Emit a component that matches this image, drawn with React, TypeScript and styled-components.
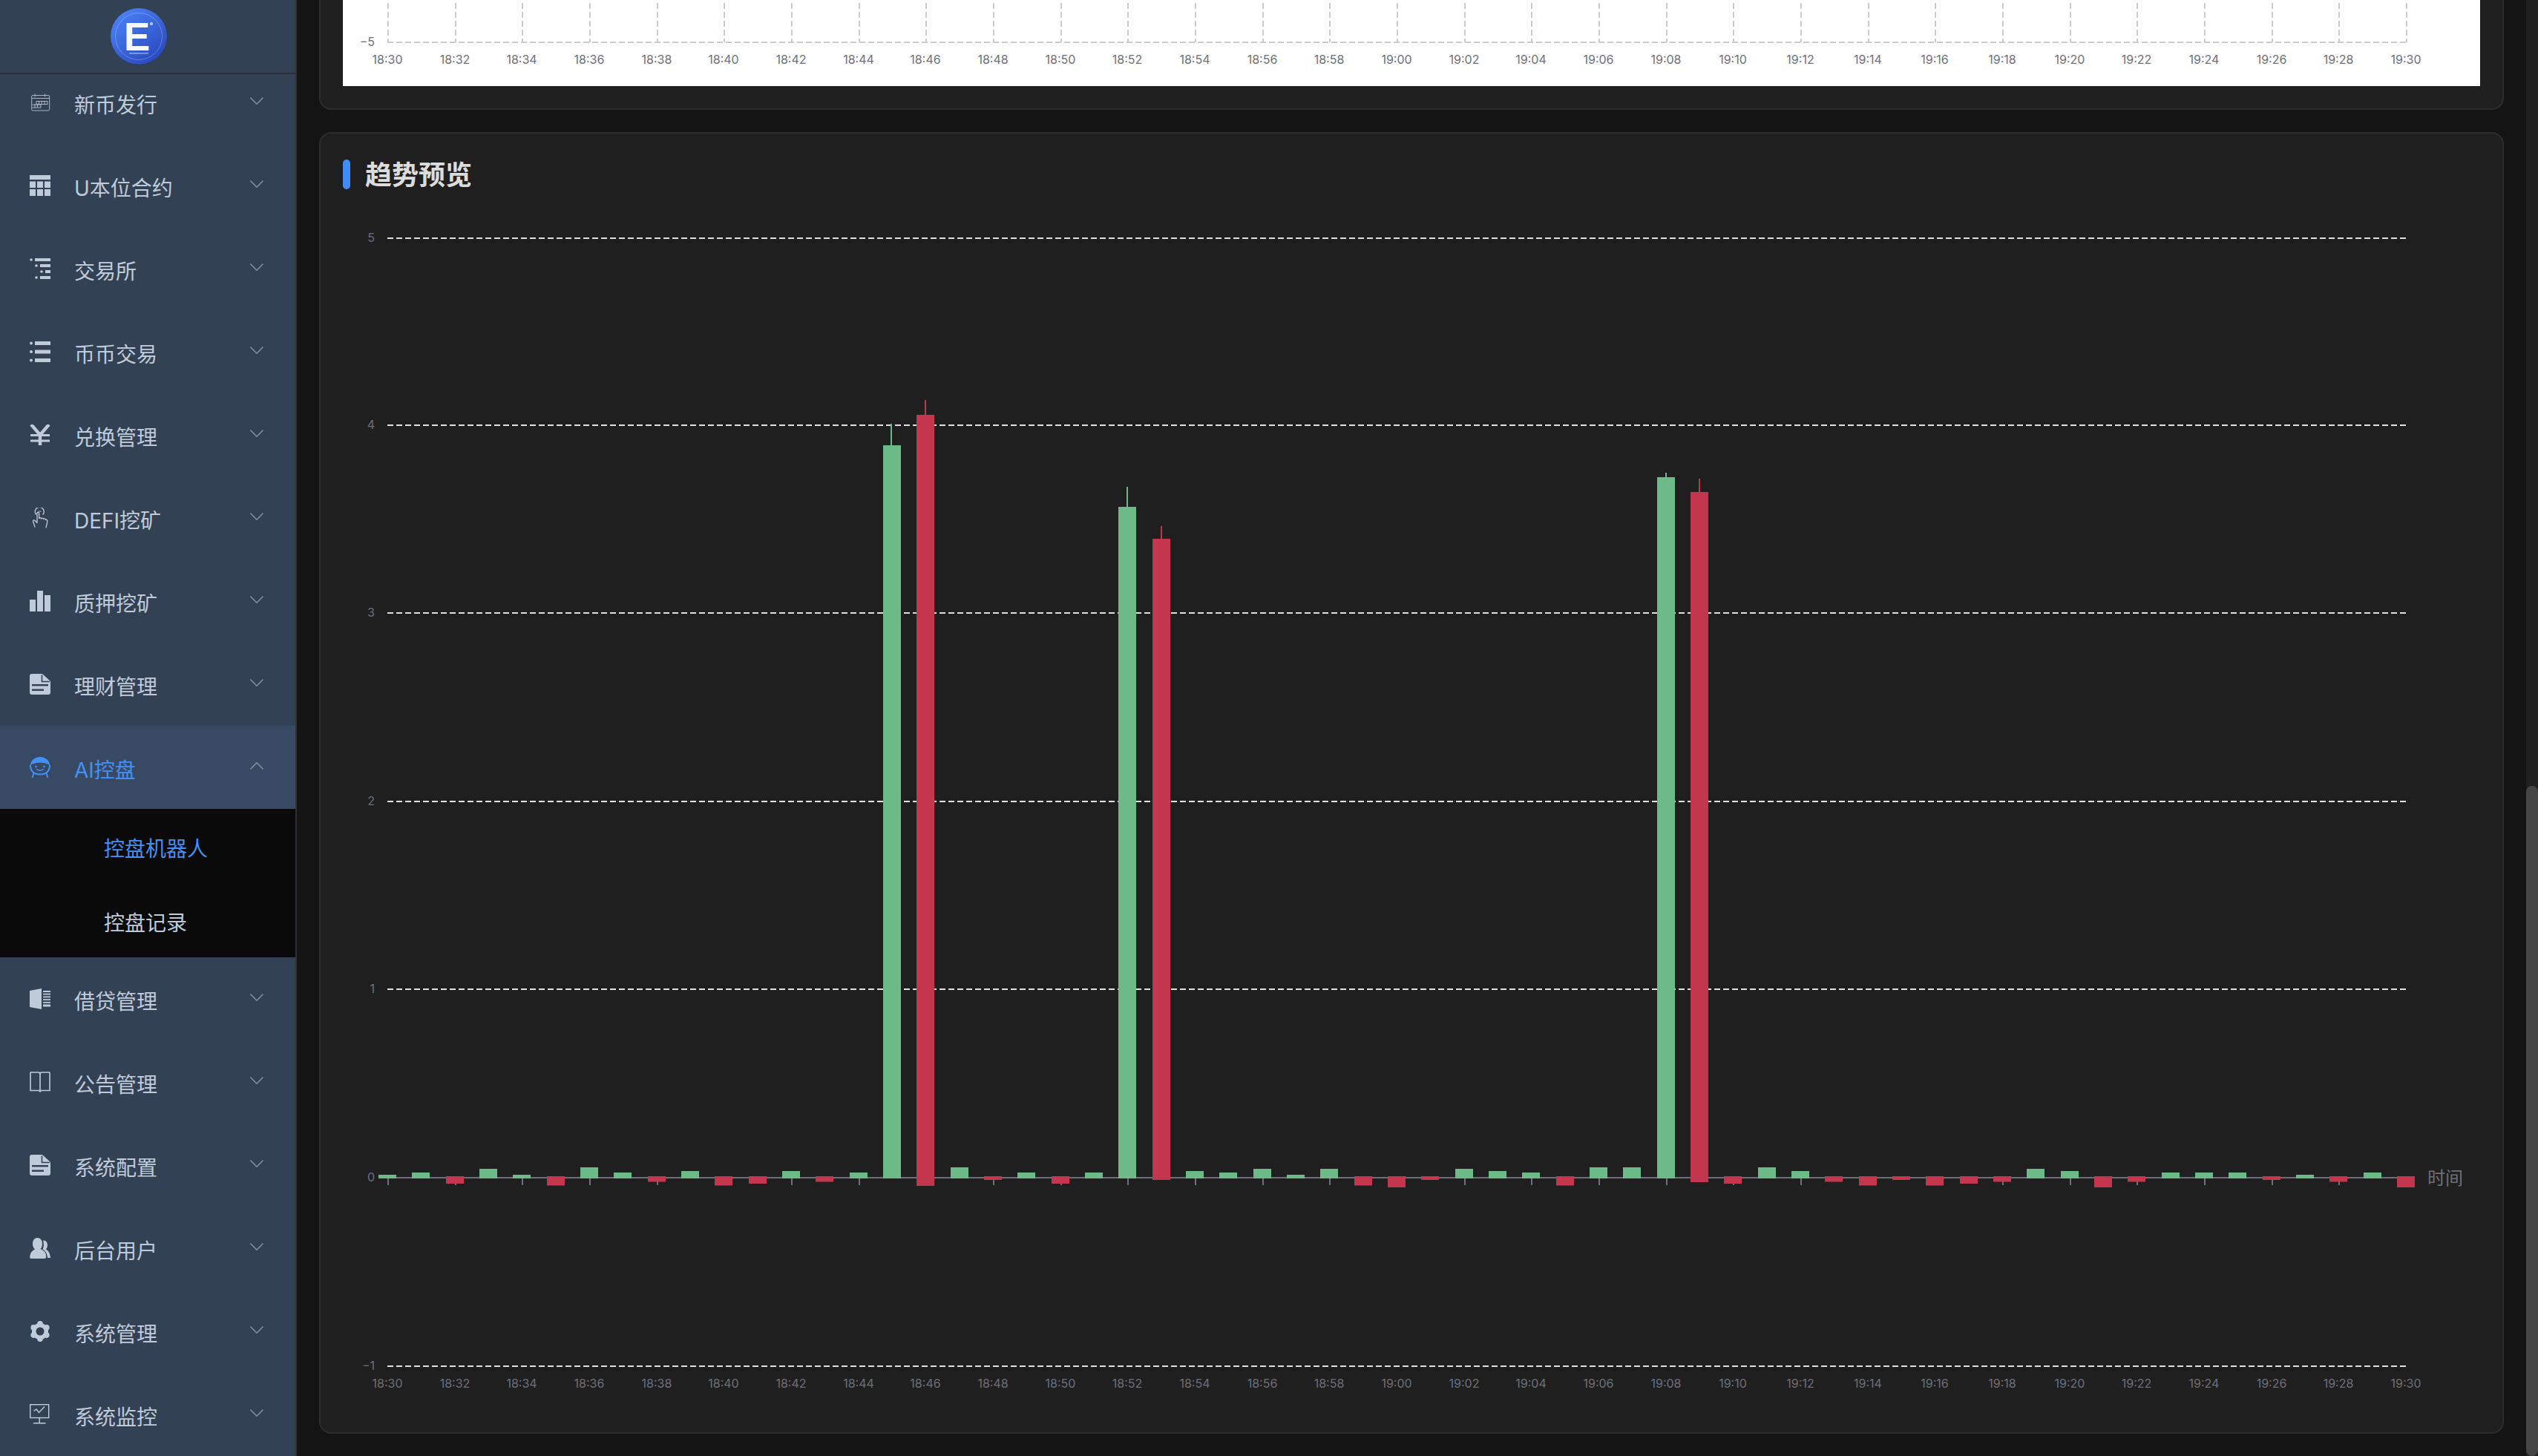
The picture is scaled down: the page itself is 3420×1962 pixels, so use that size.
import React from "react";
import styled, { createGlobalStyle } from "styled-components";

const SIDE_BG = "#334155";
const TEXT = "#bfcbd9";
const BLUE = "#4390f7";

const Global = createGlobalStyle`
  html, body { margin: 0; padding: 0; background: #141414; overflow: hidden; }
  body { font-family: Inter, "Noto Sans CJK SC", sans-serif; }
  * { box-sizing: border-box; }
`;

const Page = styled.div`
  display: flex;
  width: 3420px;
  height: 1962px;
  overflow: hidden;
  background: #141414;
`;

const Sidebar = styled.aside`
  display: flex;
  flex-direction: column;
  flex: none;
  width: 400px;
  height: 100%;
  background: ${SIDE_BG};
  border-right: 2px solid #2e3237;
`;

const LogoBar = styled.header`
  display: flex;
  flex: none;
  align-items: center;
  justify-content: center;
  height: 100px;
  padding-right: 24px;
  border-bottom: 2px solid #2b2e33;
`;

const MenuViewport = styled.nav`
  flex: 1;
  min-height: 0;
  overflow: hidden;
`;

const MenuList = styled.div`
  margin-top: -18px;
`;

const MenuRow = styled.div<{ $open?: boolean }>`
  display: flex;
  align-items: center;
  height: 112px;
  padding: 0 43px 0 40px;
  color: ${(p) => (p.$open ? BLUE : TEXT)};
  background: ${(p) => (p.$open ? "#384a63" : "transparent")};
`;

const IconSvg = styled.svg`
  flex: none;
  width: 28px;
  height: 28px;
  margin-right: 32px;
  fill: currentColor;
  stroke: none;
`;

const MenuLabel = styled.span`
  flex: 1;
  padding-top: 8px;
  font-size: 28px;
  line-height: 40px;
  white-space: nowrap;
`;

const Chevron = styled.svg`
  flex: none;
  width: 18px;
  height: 10px;
  margin-bottom: 4px;
  fill: none;
  stroke: #8a94a3;
  stroke-width: 1.4;
`;

const SubMenu = styled.div`
  background: #0a0a0b;
`;

const SubRow = styled.div<{ $active?: boolean }>`
  display: flex;
  align-items: center;
  height: 100px;
  padding: 8px 0 0 140px;
  font-size: 28px;
  line-height: 40px;
  color: ${(p) => (p.$active ? BLUE : TEXT)};
`;

const Main = styled.main`
  flex: 1;
  min-width: 0;
  height: 100%;
  padding: 0 30px;
  overflow: hidden;
`;

const ScrolledContent = styled.div`
  display: flex;
  flex-direction: column;
  gap: 30px;
  margin-top: -100px;
`;

const Card = styled.section`
  padding: 30px;
  background: #1f1f1f;
  border: 2px solid #2d2d2d;
  border-radius: 16px;
`;

const CardTitle = styled.h2`
  display: flex;
  align-items: center;
  gap: 20px;
  height: 50px;
  margin: 0;
  font-size: 36px;
  font-weight: 600;
  line-height: 50px;
  color: #dcdcdc;
`;

const TitleText = styled.span`
  padding-top: 2px;
`;

const TitleMark = styled.i`
  flex: none;
  width: 10px;
  height: 40px;
  border-radius: 5px;
  background: #3f8cfb;
`;

const ChartSvg = styled.svg<{ $h: number; $bg?: string }>`
  display: block;
  width: 2880px;
  height: ${(p) => p.$h}px;
  background: ${(p) => p.$bg ?? "transparent"};
`;

const GridLine = styled.line<{ $c: string }>`
  stroke: ${(p) => p.$c};
  stroke-width: 2;
  stroke-dasharray: 8 4;
`;

const AxisLine = styled.line`
  stroke: #6e7079;
  stroke-width: 2;
`;

const AxisText = styled.text<{ $size?: number }>`
  font-family: Inter, "Noto Sans CJK SC", sans-serif;
  font-size: ${(p) => p.$size ?? 16}px;
  fill: #6e7079;
  dominant-baseline: central;
`;

const Bar = styled.rect<{ $up: boolean }>`
  fill: ${(p) => (p.$up ? "#6cba88" : "#c4364e")};
`;

const Wick = styled.line<{ $up: boolean }>`
  stroke: ${(p) => (p.$up ? "#6cba88" : "#c4364e")};
  stroke-width: 2;
`;

const ScrollTrack = styled.div`
  display: flex;
  flex: none;
  flex-direction: column;
  justify-content: flex-end;
  width: 16px;
  height: 100%;
  background: #202020;
`;

const ScrollThumb = styled.div`
  height: 903px;
  border-radius: 8px;
  background: #454545;
`;

type IconName =
  | "calendar" | "table" | "indent" | "list" | "yen" | "hand" | "bars" | "doc"
  | "robot" | "halfbook" | "book" | "users" | "gear" | "monitor";

const IconShape: React.FC<{ name: IconName }> = ({ name }) => {
  switch (name) {
    case "calendar":
      return (
        <g fill="none" stroke="currentColor" strokeWidth="1" opacity="0.85">
          <rect x="2.7" y="4.5" width="24" height="20.5" rx="1.5" />
          <path d="M7 2.5V6.5M20.5 2.5V6.5M2.7 8.5H26.7" />
          <path d="M9 12.5H24V16.5H9ZM12.5 12.5V16.5M16 12.5V16.5M20 12.5V16.5M3.5 17H15V21H3.5M7 16.5V21M10.5 16.5V21M9 16.5H15" />
        </g>
      );
    case "table":
      return (
        <path d="M0 0H28V6H0ZM0 8.5H8V17H0ZM10 8.5H18V17H10ZM20 8.5H28V17H20ZM0 19H8V28H0ZM10 19H18V28H10ZM20 19H28V28H20Z" />
      );
    case "indent":
      return (
        <g>
          <rect x="7" y="0" width="21" height="4" />
          <circle cx="2" cy="2" r="1.8" />
          <rect x="14" y="8" width="14" height="4" />
          <circle cx="9" cy="10" r="1.8" />
          <rect x="21" y="16" width="7" height="4" />
          <circle cx="16" cy="18" r="1.8" />
          <rect x="14" y="24" width="14" height="4" />
          <circle cx="9" cy="26" r="1.8" />
        </g>
      );
    case "list":
      return (
        <g>
          <rect x="7" y="0" width="21" height="5" />
          <circle cx="2" cy="2.5" r="2" />
          <rect x="7" y="11.5" width="21" height="5" />
          <circle cx="2" cy="14" r="2" />
          <rect x="7" y="23" width="21" height="5" />
          <circle cx="2" cy="25.5" r="2" />
        </g>
      );
    case "yen":
      return (
        <g fill="none" stroke="currentColor">
          <path d="M2 0L14 14L26 0" strokeWidth="4.4" />
          <path d="M14 13V28" strokeWidth="4.4" />
          <path d="M1 14.5H27M1 22H27" strokeWidth="3" />
        </g>
      );
    case "hand":
      return (
        <g fill="none" stroke="currentColor" strokeWidth="1.3" strokeLinecap="round" strokeLinejoin="round">
          <path d="M8.5 9A6 6 0 1 1 18 9" />
          <path d="M12 5.5A2 2 0 0 1 15 5.5" opacity="0.6" />
          <path d="M7 26L4.5 18.5C4.3 16.8 6.2 16.3 7.3 17.8L10 20.5V7.5C10 5.8 12.6 5.8 12.6 7.5V14.5C13 13 15.5 13.3 15.6 15C16 13.6 18.4 13.9 18.5 15.6C19 14.5 21.4 14.8 21.5 16.5C22.7 15.8 24 16.6 23.8 18.2C23.6 21 23 23.5 22 27" />
        </g>
      );
    case "bars":
      return <path d="M0 12H8V28H0ZM10 0H18V28H10ZM20 6H28V28H20Z" />;
    case "doc":
      return (
        <g>
          <path d="M3 0H17L28 10V25Q28 28 25 28H3Q0 28 0 25V3Q0 0 3 0Z" />
          <path d="M16.5 1.5V10.5H27" fill="none" stroke={SIDE_BG} strokeWidth="1.6" />
          <rect x="3" y="14" width="22" height="2.4" fill={SIDE_BG} />
          <rect x="3" y="20.5" width="16" height="2.4" fill={SIDE_BG} />
        </g>
      );
    case "robot":
      return (
        <g>
          <path d="M1 11.5A13 11.5 0 0 1 27 11.5C22 6.5 6 6.5 1 11.5Z" />
          <g fill="none" stroke="currentColor" strokeWidth="2" strokeLinecap="round">
            <path d="M1 11.5C1 17.5 4 21 8 22.5Q14 24.5 20 22.5C24 21 27 17.5 27 11.5" />
            <path d="M9.5 16.5Q14 20 18.5 16.5" strokeWidth="1.5" />
            <path d="M5.5 22L3.5 28M22.5 22L24.5 28" />
          </g>
          <circle cx="8.5" cy="13" r="1.3" />
          <circle cx="19.5" cy="13" r="1.3" />
        </g>
      );
    case "halfbook":
      return (
        <g>
          <path d="M0 3L16 0V28L0 25Z" />
          <path d="M18 3H28V5H18ZM18 6.800H28V8.600H18ZM18 10.500H28V12.300H18ZM18 14.200H28V16H18ZM18 17.900H28V19.700H18ZM18 21.500H28V24.500H18Z" />
        </g>
      );
    case "book":
      return (
        <g fill="none" stroke="currentColor" strokeWidth="1.6">
          <path d="M1 1H11.500Q14 1 14 3.500V27" />
          <path d="M27 1H16.500Q14 1 14 3.500" />
          <path d="M1 1V25.500H12.500L14 27L15.500 25.500H27V1" />
        </g>
      );
    case "users":
      return (
        <g>
          <path d="M10.500 0C14.500 0 17 3.500 17 8C17 11 16 13.500 14.500 15C18 16.500 21.500 19 22 23C22.300 26 22 28 20 28H2C0 28 0 26 0.500 23.500C1.200 20 3.500 17 7 15.500C5 13.500 4 11 4 8C4 3.500 6.500 0 10.500 0Z" />
          <path d="M18 3.500C21.500 3 24 6 24 9.500C24 12 23.300 14 22 15.500C25 17 27.500 21 28 27H24C24 21.500 21 17.500 17.500 15.500C19 12.500 19.500 7.500 18 3.500Z" />
        </g>
      );
    case "gear":
      return (
        <g>
          <circle cx="14" cy="14" r="11" />
          <circle cx="14" cy="3.800" r="3.800" />
          <circle cx="14" cy="24.200" r="3.800" />
          <circle cx="5.200" cy="8.900" r="3.800" />
          <circle cx="22.800" cy="8.900" r="3.800" />
          <circle cx="5.200" cy="19.100" r="3.800" />
          <circle cx="22.800" cy="19.100" r="3.800" />
          <circle cx="14" cy="14" r="5.500" fill={SIDE_BG} />
        </g>
      );
    case "monitor":
      return (
        <g fill="none" stroke="currentColor" strokeWidth="1.4">
          <rect x="0.700" y="0.700" width="25" height="17.800" />
          <path d="M5.500 9.500L9 7L12.500 11.500L20 3.500" />
          <path d="M13.200 18.500V25.500M5 25.800H21.500" />
        </g>
      );
  }
};

const MenuIcon: React.FC<{ name: IconName }> = ({ name }) => (
  <IconSvg viewBox="0 0 28 28" aria-hidden="true">
    <IconShape name={name} />
  </IconSvg>
);

const ChevronIcon: React.FC<{ up?: boolean }> = ({ up }) => (
  <Chevron viewBox="0 0 18 10" aria-hidden="true">
    <path d={up ? "M0.500 9.500L9 0.800L17.500 9.500" : "M0.500 0.500L9 9.200L17.500 0.500"} />
  </Chevron>
);

const Logo = () => (
  <svg width="84" height="84" viewBox="145 8 84 84" aria-label="logo">
    <defs>
      <linearGradient id="logoFill" x1="0.15" y1="0.05" x2="0.85" y2="0.95">
        <stop offset="0" stopColor="#4b82f6" />
        <stop offset="1" stopColor="#2947bd" />
      </linearGradient>
    </defs>
    <circle cx="187" cy="51" r="38" fill="#1f2b3d" opacity="0.35" />
    <circle cx="187" cy="50" r="38" fill="url(#logoFill)" />
    <circle cx="187" cy="50" r="31.500" fill="none" stroke="#ffffff" strokeOpacity="0.25" strokeWidth="1" />
    <text x="167" y="69" fontFamily="'Liberation Sans', sans-serif" fontWeight="700" fontSize="53" fill="#f6f8ff">E</text>
    <circle cx="204" cy="33" r="2.200" fill="#a9c2ff" />
    <rect x="174" y="72" width="26" height="1.600" fill="#ffffff" opacity="0.45" />
  </svg>
);

const MENU_BEFORE: [IconName, string][] = [
  ["calendar", "新币发行"],
  ["table", "U本位合约"],
  ["indent", "交易所"],
  ["list", "币币交易"],
  ["yen", "兑换管理"],
  ["hand", "DEFI挖矿"],
  ["bars", "质押挖矿"],
  ["doc", "理财管理"],
];

const MENU_AFTER: [IconName, string][] = [
  ["halfbook", "借贷管理"],
  ["book", "公告管理"],
  ["doc", "系统配置"],
  ["users", "后台用户"],
  ["gear", "系统管理"],
  ["monitor", "系统监控"],
];

const X0 = 523;
const XEND = 3243;
const TICK = (XEND - X0) / 30;
const CANDLE_STEP = (XEND - X0) / 60;

const timeLabel = (k: number) => {
  const total = 18 * 60 + 30 + k * 2;
  return `${Math.floor(total / 60)}:${String(total % 60).padStart(2, "0")}`;
};
const TICKS = Array.from({ length: 31 }, (_, k) => ({ x: Math.round(X0 + TICK * k), label: timeLabel(k) }));

const SMALL: (number | null)[] = [
  5, 8, -10, 13, 5, -12.5, 15, 8, -7.5, 10, -12.5, -10, 10, -7.5, 8, null, null, 15, -5, 8, -10, 8, null, null,
  10, 8, 13, 5, 13, -12.5, -15, -5, 13, 10, 8, -12.5, 15, 15, null, null, -10, 15, 10, -7.5, -12.5, -5, -12.5,
  -10, -7.5, 13, 10, -15, -7.5, 8, 8, 8, -5, 5, -7.5, 8, -15,
];

const BIG: Record<number, { up: boolean; top: number; bottom: number; wick: number; wx: number }> = {
  15: { up: true, top: 600, bottom: 1588, wick: 571, wx: 1201 },
  16: { up: false, top: 559, bottom: 1598, wick: 539, wx: 1247 },
  22: { up: true, top: 683, bottom: 1588, wick: 656, wx: 1519 },
  23: { up: false, top: 726, bottom: 1590, wick: 709, wx: 1565 },
  38: { up: true, top: 643, bottom: 1588, wick: 637, wx: 2245 },
  39: { up: false, top: 663, bottom: 1593, wick: 645, wx: 2290 },
};

const Y_LINES: [string, number][] = [
  ["5", 321],
  ["4", 573],
  ["3", 826],
  ["2", 1080],
  ["1", 1333],
  ["−1", 1841],
];

const Candles = () => (
  <>
    {SMALL.map((v, i) => {
      const left = Math.round(X0 - 1 + CANDLE_STEP * i - 12);
      const big = BIG[i];
      if (big) {
        return (
          <g key={i}>
            <Wick $up={big.up} x1={big.wx} x2={big.wx} y1={big.wick} y2={big.top} />
            <Bar $up={big.up} x={left} y={big.top} width={24} height={big.bottom - big.top} />
          </g>
        );
      }
      const h = v as number;
      const up = h > 0;
      return <Bar key={i} $up={up} x={left} y={up ? 1588 - h : 1585} width={24} height={Math.abs(h)} />;
    })}
  </>
);

const TopChart = () => (
  <ChartSvg $h={184} $bg="#ffffff" viewBox="462 -68 2880 184">
    {TICKS.map((t) => (
      <GridLine key={t.x} $c="#cccccc" x1={t.x} x2={t.x} y1={-68} y2={57} />
    ))}
    <GridLine $c="#cccccc" x1={X0 - 1} x2={XEND} y1={57} y2={57} />
    <AxisText x={505} y={56} textAnchor="end">−5</AxisText>
    {TICKS.map((t) => (
      <AxisText key={t.label} x={t.x - 1} y={80} textAnchor="middle">{t.label}</AxisText>
    ))}
  </ChartSvg>
);

const TrendChart = () => (
  <ChartSvg $h={1640} viewBox="462 260 2880 1640">
    {Y_LINES.map(([label, y]) => (
      <g key={label}>
        <GridLine $c="#e0e0e0" x1={X0 - 1} x2={XEND - 1} y1={y} y2={y} />
        <AxisText x={505} y={y - 1} textAnchor="end">{label}</AxisText>
      </g>
    ))}
    <AxisText x={505} y={1586} textAnchor="end">0</AxisText>
    <AxisLine x1={X0 - 1} x2={XEND} y1={1587} y2={1587} />
    {TICKS.map((t) => (
      <AxisLine key={t.x} x1={t.x} x2={t.x} y1={1587} y2={1597} />
    ))}
    <Candles />
    {TICKS.map((t) => (
      <AxisText key={t.label} x={t.x - 1} y={1864} textAnchor="middle">{t.label}</AxisText>
    ))}
    <AxisText $size={24} x={3271} y={1587}>时间</AxisText>
  </ChartSvg>
);

export default function App() {
  return (
    <Page>
      <Global />
      <Sidebar>
        <LogoBar>
          <Logo />
        </LogoBar>
        <MenuViewport>
          <MenuList>
            {MENU_BEFORE.map(([icon, label]) => (
              <MenuRow key={label}>
                <MenuIcon name={icon} />
                <MenuLabel>{label}</MenuLabel>
                <ChevronIcon />
              </MenuRow>
            ))}
            <MenuRow $open>
              <MenuIcon name="robot" />
              <MenuLabel>AI控盘</MenuLabel>
              <ChevronIcon up />
            </MenuRow>
            <SubMenu>
              <SubRow $active>控盘机器人</SubRow>
              <SubRow>控盘记录</SubRow>
            </SubMenu>
            {MENU_AFTER.map(([icon, label]) => (
              <MenuRow key={label}>
                <MenuIcon name={icon} />
                <MenuLabel>{label}</MenuLabel>
                <ChevronIcon />
              </MenuRow>
            ))}
          </MenuList>
        </MenuViewport>
      </Sidebar>
      <Main>
        <ScrolledContent>
          <Card>
            <TopChart />
          </Card>
          <Card>
            <CardTitle>
              <TitleMark />
              <TitleText>趋势预览</TitleText>
            </CardTitle>
            <TrendChart />
          </Card>
        </ScrolledContent>
      </Main>
      <ScrollTrack>
        <ScrollThumb />
      </ScrollTrack>
    </Page>
  );
}
